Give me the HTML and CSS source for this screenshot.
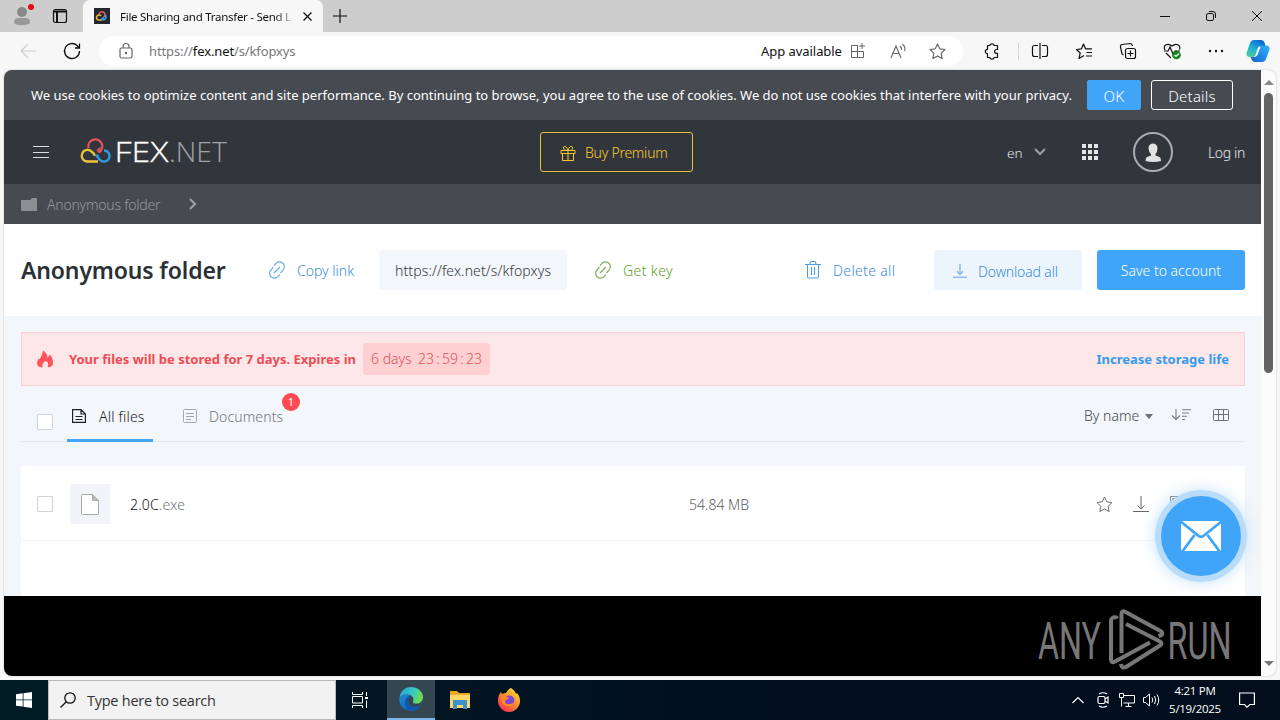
FILE: index.html
```html
<!DOCTYPE html>
<html lang="en">

<head>
    <meta charset="UTF-8">
    <meta name="viewport" content="width=device-width, initial-scale=1.0">
    <title>File Sharing and Transfer - Send Large Files</title>
    <link rel="stylesheet" href="styles.css">
</head>

<body>
    <div class="titlebar">
        <div class="title-left">
            <svg class="profile" width="26" height="26" viewBox="0 0 26 26"><circle cx="13" cy="9" r="5" fill="#888"/><path d="M5 20c0-5 2-5 8-5s8 0 8 5c-3 3-13 3-16 0z" fill="#999"/><circle cx="22" cy="4" r="3" fill="#e20a17"/></svg>
            <svg class="workspace" width="16" height="16" viewBox="0 0 16 16" fill="none" stroke="#111" stroke-width="1.2"><rect x="1.500" y="1.500" width="13" height="13" rx="2"/><path d="M2 3.500h12M5 4v10" stroke-width="2"/></svg>
        </div>
        <div class="tab">
            <svg width="16" height="16" viewBox="0 0 16 16" fill="none" stroke-width="1.6"><rect width="16" height="16" fill="#24272d"/><path d="M5 7a3 3 0 1 1 5 2" stroke="#e5535b"/><path d="M8 12H5a2.500 2.500 0 1 1 2-4" stroke="#e6b93a"/><path d="M11 7a2.500 2.500 0 1 1-3 4l2-2" stroke="#38a1e8"/></svg>
            <span class="tab-title">File Sharing and Transfer - Send L</span>
            <svg class="tab-close" width="9" height="9" viewBox="0 0 9 9" stroke="#111" stroke-width="1.3"><path d="M.5.5l8 8M8.500.5l-8 8"/></svg>
        </div>
        <svg class="newtab" width="14" height="14" viewBox="0 0 14 14" stroke="#111" stroke-width="1.2"><path d="M7 0v14M0 7h14"/></svg>
        <div class="win-btns">
            <svg width="10" height="10" viewBox="0 0 10 10" stroke="#111"><path d="M0 5.500h10"/></svg>
            <svg width="10" height="10" viewBox="0 0 10 10" fill="none" stroke="#111"><rect x=".5" y="2.500" width="7" height="7" rx="1.500"/><path d="M3 .5h4a2.500 2.500 0 0 1 2.500 2.500v4"/></svg>
            <svg width="10" height="10" viewBox="0 0 10 10" stroke="#111"><path d="M0 0l10 10M10 0L0 10"/></svg>
        </div>
    </div>

    <div class="toolbar">
        <svg class="back" width="16" height="16" viewBox="0 0 16 16" fill="none" stroke="#ccc" stroke-width="1.2"><path d="M16 8H1M8 1L1 8l7 7"/></svg>
        <svg class="reload" width="18" height="18" viewBox="0 0 18 18" fill="none" stroke="#111" stroke-width="1.3"><path d="M16.500 9a7.500 7.500 0 1 1-2.200-5.300L16.300 6M16.500 1.500V6H12"/></svg>
        <div class="address">
            <svg width="14" height="16" viewBox="0 0 14 16" fill="none" stroke="#666" stroke-width="1.2"><rect x="1" y="5" width="12" height="10" rx="1.500"/><path d="M4 5V3.500a3 3 0 0 1 6 0V5"/><circle cx="7" cy="10" r=".7" fill="#555"/></svg>
            <span class="url">https://<b>fex.net</b>/s/kfopxys</span>
            <span class="app">App available</span>
            <svg class="apps-icon" width="16" height="16" viewBox="0 0 16 16" fill="none" stroke="#666"><path d="M8 2.500H1.500v12h12V8.500M1.500 8.500h12M7.500 2.500v12M12 0v6M9 3h6"/></svg>
            <svg class="read-icon" width="17" height="16" viewBox="0 0 17 16" fill="none" stroke="#666" stroke-width="1.100"><path d="M1 15L6 3l5 12M3 10.500h6M10 3q2 1.500 1.500 4M12.500 1q3.500 3 2 7"/></svg>
            <svg class="fav-icon" width="17" height="17" viewBox="0 0 18 18" fill="none" stroke="#666" stroke-width="1.200" stroke-linejoin="round"><path d="M9 1l2.400 5.200 5.600.7-4.100 3.900 1 5.700L9 13.700l-4.900 2.800 1-5.700L1 6.900l5.600-.7z"/></svg>
        </div>
        <div class="tools">
            <svg width="18" height="18" viewBox="0 0 18 18" fill="none" stroke="#111" stroke-width="1.200" stroke-linejoin="round"><path d="M4.500 3.500h2.300a2.300 2.300 0 0 1 4.400 0h3.300v4h-1a1.900 1.900 0 0 0 0 3.800h1v4.200h-3.300a2.300 2.300 0 0 1-4.400 0H4.500v-3.800a2.200 2.200 0 0 1 0-4.400z"/></svg>
            <i class="divider"></i>
            <svg width="18" height="18" viewBox="0 0 18 18" fill="none" stroke="#111" stroke-width="1.200"><path d="M7 3.500H3.500a2 2 0 0 0-2 2v7a2 2 0 0 0 2 2H7M11 3.500h3.500a2 2 0 0 1 2 2v7a2 2 0 0 1-2 2H11M9 1v16"/></svg>
            <svg width="18" height="18" viewBox="0 0 18 18" fill="none" stroke="#111" stroke-width="1.200" stroke-linejoin="round"><path d="M9 13.500L4 16.500l1.200-5.500L1.500 7.500l5-.7L8.500 2l2 4.800H17M11.500 10.500H17M11 14h6"/></svg>
            <svg width="18" height="18" viewBox="0 0 18 18" fill="none" stroke="#111" stroke-width="1.200"><rect x="6.500" y="6.500" width="10" height="10" rx="2"/><path d="M11.500 8.500v6M8.500 11.500h6M4.500 13L3 12l-1.500-7a2 2 0 0 1 2-2.500L11 1.500q2 0 2.500 2.500"/></svg>
            <svg width="18" height="18" viewBox="0 0 18 18" fill="none" stroke="#111" stroke-width="1.200"><path d="M2 8C-.5 3 5 .5 9 4c4-3.500 9-1 7.500 3.500M1 9h4l2-4 3 7 2-3h5M3 11l5 5"/><circle cx="13.500" cy="13" r="4.300" fill="#16821c" stroke="none"/><path d="M11.500 13l1.500 1.500 3-3" stroke="#fff"/></svg>
            <svg width="18" height="18" viewBox="0 0 18 18" fill="#111"><circle cx="3" cy="9" r="1.200"/><circle cx="9" cy="9" r="1.200"/><circle cx="15" cy="9" r="1.200"/></svg>
        </div>
        <svg class="copilot" width="24" height="24" viewBox="0 0 24 24">
            <defs>
                <linearGradient id="cpa" x1="0" y1="1" x2="0.600" y2="0"><stop offset="0" stop-color="#57d08b"/><stop offset=".5" stop-color="#20b5d5"/><stop offset="1" stop-color="#126bd0"/></linearGradient>
                <linearGradient id="cpb" x1="0" y1="1" x2="1" y2="0"><stop offset="0" stop-color="#1762c9"/><stop offset="1" stop-color="#2bb5ff"/></linearGradient>
            </defs>
            <path d="M8 1h7q3 0 4 4l.5 2H15q-2.500 0-3.300 3L10 15q-.8 3-3 3H4q-4 0-3.500-4L4 4q1-3 4-3z" fill="url(#cpa)"/>
            <path d="M16 23H9q-3 0-4-4l-.3-1H8q2.700 0 3.600-3L13 9.500Q14 6.500 17 6.500h3q4 0 3.500 4L20 20q-1 3-4 3z" fill="url(#cpb)"/>
            <path d="M12.300 8h2.200l-3 8H9.500z" fill="#fff"/>
        </svg>
    </div>

    <div class="content">
        <div class="page">
            <div class="cookies">
                <span class="cookies-text">We use cookies to optimize content and site performance. By continuing to browse, you agree to the use of cookies. We do not use cookies that interfere with your privacy.</span>
                <button type="button" class="ok">OK</button>
                <button type="button" class="details">Details</button>
            </div>
            <div class="header">
                <svg class="burger" width="16" height="12" viewBox="0 0 16 12" stroke="#ddd"><path d="M0 .5h16M0 6.500h16M0 11.500h16"/></svg>
                <svg class="logo" width="150" height="30" viewBox="0 0 150 30">
                    <g fill="none" stroke-width="2.300">
                        <path d="M8.500 12A7 7 0 1 1 19.500 16L17.500 15" stroke="#e25258"/>
                        <path d="M18 25.500H7a5.800 5.800 0 1 1 5-9.500q3 2 2.500 4" stroke="#f0c33c"/>
                        <path d="M24 14.500a5.600 5.600 0 1 1-4.500 9L16.500 19.500" stroke="#2f9be8"/>
                        <path d="M14.500 18.500h4v4z" fill="#2f9be8" stroke="none"/>
                        <path d="M16 14.500h4.500v-4z" fill="#e25258" stroke="none"/>
                    </g>
                    <text x="34.500" y="25.500" textLength="54" lengthAdjust="spacingAndGlyphs" class="logo-fex">FEX</text>
                    <text x="89" y="25.500" textLength="58" lengthAdjust="spacingAndGlyphs" class="logo-net">.NET</text>
                </svg>
                <button type="button" class="premium">
                    <svg width="16" height="16" viewBox="0 0 16 16" fill="none" stroke="#fdc92b"><path d="M1 5.500h14v3H1zM2.500 8.500h11v7h-11zM8 5.500v10M8 5.500C7 1 3.500 0 3.500 3q0 2.500 4.500 2.500C12.500 5.500 12.500 5 12.500 3 12.500 0 9 1 8 5.500"/></svg>
                    <span>Buy Premium</span>
                </button>
                <span class="lang">en</span>
                <svg class="lang-arrow" width="12" height="8" viewBox="0 0 12 8" fill="none" stroke="#9a9da2" stroke-width="2"><path d="M1 1l5 5 5-5"/></svg>
                <svg class="grid" width="16" height="16" viewBox="0 0 16 16" fill="#e4e5e6"><path d="M0 0h4v4H0zM6 0h4v4H6zM12 0h4v4h-4zM0 6h4v4H0zM6 6h4v4H6zM12 6h4v4h-4zM0 12h4v4H0zM6 12h4v4H6zM12 12h4v4h-4z"/></svg>
                <svg class="avatar" width="40" height="40" viewBox="0 0 40 40"><circle cx="20" cy="20" r="19" fill="none" stroke="#a9acb1" stroke-width="2"/><path d="M15.500 16c0-6 9-6 9 0q0 4-2 6v1.500l4 1.500q1.500.7 1.500 4-8 2-15.500 0 0-3.300 1.500-4l4-1.500V22q-2.500-2-2.500-6z" fill="#e1e2e3"/></svg>
                <span class="login">Log in</span>
            </div>
            <div class="crumbs">
                <svg width="16" height="13" viewBox="0 0 16 13" fill="#8b8f94"><path d="M0 2h9l2-2h5v13H0z"/></svg>
                <span class="crumb">Anonymous folder</span>
                <svg width="8" height="12" viewBox="0 0 8 12" fill="none" stroke="#a0a3a8" stroke-width="2"><path d="M1 1l5 5-5 5"/></svg>
            </div>
            <div class="actions">
                <h1>Anonymous folder</h1>
                <svg class="link-icon" width="18" height="18" viewBox="0 0 18 18" fill="none" stroke="#6aaee2" stroke-width="1.200"><path d="M6 4.500l1.800-1.800a4.800 4.800 0 0 1 7.500 6L12.500 12M12 13.500l-1.800 1.800a4.800 4.800 0 0 1-7.500-6L5.500 6M6 12l6-6"/></svg>
                <span class="copy">Copy link</span>
                <span class="link-box"><span>https://fex.net/s/kfopxys</span></span>
                <svg class="key-icon" width="18" height="18" viewBox="0 0 18 18" fill="none" stroke="#84ae55" stroke-width="1.200"><path d="M6 4.500l1.800-1.800a4.800 4.800 0 0 1 7.500 6L12.500 12M12 13.500l-1.800 1.800a4.800 4.800 0 0 1-7.500-6L5.500 6M6 12l6-6"/></svg>
                <span class="key">Get key</span>
                <svg class="trash" width="16" height="18" viewBox="0 0 16 18" fill="none" stroke="#4c9de0" stroke-width="1.100"><path d="M0 3.500h16M2.500 3.500v12q0 1.500 1.500 1.500h8q1.500 0 1.500-1.500v-12M5 3.500q0-3 1.500-3h3q1.500 0 1.500 3M6.500 6v8M9.500 6v8"/></svg>
                <span class="delete">Delete all</span>
                <button type="button" class="download">
                    <svg width="14" height="14" viewBox="0 0 14 14" fill="none" stroke="#8fbce6" stroke-width="1.500"><path d="M7 0v10M4 7l3 3.500L10 7M0 13.300h14"/></svg>
                    <span>Download all</span>
                </button>
                <button type="button" class="save"><span>Save to account</span></button>
            </div>

            <div class="main">
                <div class="alert">
                    <svg width="16" height="18" viewBox="0 0 16 18" fill="#ff5459"><path d="M6 .5c3 2 4.500 4 4.500 7.500L13 4.500c2 3 3 5 3 8.500 0 2-1 3-3 4l-2.500.5Q12 15 10.500 12L8 11c-2 2-3.500 4-2 6.500L3 17C-.5 16-.5 12 1.500 8.500l1 1C4 7 5.500 4 6 .5z"/></svg>
                    <span class="alert-text">Your files will be stored for 7 days. Expires in</span>
                    <span class="timer"><span class="days">6 days</span><span class="clock">23<i>:</i>59<i>:</i>23</span></span>
                    <a href="#" class="increase">Increase storage life</a>
                </div>

                <div class="tabs">
                    <span class="check"></span>
                    <div class="filter active">
                        <svg width="14" height="14" viewBox="0 0 14 14" fill="none" stroke="#1e2227" stroke-width="1.200"><path d="M.6.600H9L13.400 5v8.400H.6zM9 .6V5h4.400M3.500 7.500h7M3.500 10.500h7"/></svg>
                        <span>All files</span>
                    </div>
                    <div class="filter docs">
                        <svg width="14" height="14" viewBox="0 0 14 14" fill="none" stroke="#a4a8ad"><rect x=".5" y=".5" width="13" height="13" rx="1"/><path d="M3 4.500h8M3 7.500h8M3 10.500h5"/></svg>
                        <span>Documents</span>
                        <b class="badge">1</b>
                    </div>
                    <span class="sort">By name</span>
                    <i class="caret"></i>
                    <svg class="sort-icon" width="20" height="12" viewBox="0 0 20 12" fill="none" stroke="#777c82" stroke-width="1.100"><path d="M5 0v10.500M1 6.500l4 4 4-4M11 .8h9M11 4h7M11 7.200h5M11 10.500h3"/></svg>
                    <svg class="table-icon" width="16" height="12" viewBox="0 0 16 12" fill="none" stroke="#6c7177"><rect x=".5" y=".5" width="15" height="11" rx="1"/><path d="M.5 5.500h15M5.500.5v11M10.500.5v11"/></svg>
                </div>

                <div class="list">
                    <div class="row">
                        <span class="check"></span>
                        <span class="thumb">
                            <svg width="18" height="21" viewBox="0 0 18 21" fill="#fff" stroke="#aaa"><path d="M1.500.5h10l6 6v13q0 1-1 1h-15q-1 0-1-1v-18q0-1 1-1z"/><path d="M11.500.5v6h6z" fill="#bbb"/></svg>
                        </span>
                        <span class="name">2.0C<i>.exe</i></span>
                        <span class="size">54.84 MB</span>
                        <svg class="star" width="17" height="17" viewBox="0 0 18 18" fill="none" stroke="#666" stroke-linejoin="round"><path d="M9 1l2.400 5.200 5.600.7-4.100 3.900 1 5.700L9 13.700l-4.900 2.800 1-5.700L1 6.900l5.600-.7z"/></svg>
                        <svg class="dl" width="16" height="17" viewBox="0 0 16 17" fill="none" stroke="#666"><path d="M8 0v13M4.500 9.500L8 13l3.500-3.500M0 15.500h16"/></svg>
                        <svg class="copy-icon" width="14" height="17" viewBox="0 0 14 17" fill="none" stroke="#666"><path d="M.5 14V.5H10M2.500 2.500h9v13h-9z"/></svg>
                    </div>
                </div>
                <div class="mail">
                    <svg width="40" height="30" viewBox="0 0 40 30"><path d="M0 0h40v30H0z" fill="#fff"/><path d="M-1 0l18 14.500q3 2.500 6 0L41 0M1 31l12.500-17M39 31L26.500 14" fill="none" stroke="#40a4f8" stroke-width="2.800"/></svg>
                </div>
            </div>

            <div class="black">
                <svg width="194" height="62" viewBox="0 0 194 62">
                    <g class="mark-text">
                        <text x="0" y="50" textLength="63" lengthAdjust="spacingAndGlyphs">ANY</text>
                        <text x="129.500" y="50" textLength="64" lengthAdjust="spacingAndGlyphs">RUN</text>
                    </g>
                    <path d="M78.500 9.500v-1q-5.500-1-5.500 4v38q0 4 4 2l35-19M83.500 44V5q0-4 4-2l35 19q3 2 1 4l-3 1M88 15l34 17.500q3 2 0 4L88 58q-4.500 2-5-3" fill="none" stroke="#777" stroke-width="4" stroke-linejoin="round"/>
                </svg>
            </div>
        </div>
        <div class="scroll">
            <i class="up"></i>
            <i class="thumb-bar"></i>
            <i class="down"></i>
        </div>
    </div>

    <div class="taskbar">
        <div class="start"><svg width="16" height="16" viewBox="0 0 16 16" fill="#fff"><path d="M0 2.300L6.700 1.300v6.200H0zM7.500 1.200L16 0v7.500H7.500zM0 8.300h6.700v6.300L0 13.700zM7.500 8.300H16V16l-8.500-1.200z"/></svg></div>
        <div class="search">
            <svg width="16" height="16" viewBox="0 0 16 16" fill="none" stroke="#111" stroke-width="1.300"><circle cx="10" cy="6" r="5.200"/><path d="M6.300 9.700L.5 15.500"/></svg>
            <span>Type here to search</span>
        </div>
        <div class="task"><svg width="16" height="16" viewBox="0 0 16 16" fill="none" stroke="#fff"><path d="M.5 0v2.500h10V0M.5 16v-2.500h10V16M.5 4.500h10v6.500H.5zM14.500 0v4M14.500 8.500V16"/><path d="M13 5h3v2h-3z" fill="#fff" stroke="none"/></svg></div>
        <div class="task edge">
            <svg width="24" height="24" viewBox="0 0 24 24">
                <defs>
                    <linearGradient id="ea" x1="0" y1="0" x2="1" y2=".3"><stop offset="0" stop-color="#269bdc"/><stop offset=".6" stop-color="#35c9c4"/><stop offset="1" stop-color="#69dc57"/></linearGradient>
                    <linearGradient id="eb" x1="0" y1="0" x2="1" y2="1"><stop offset="0" stop-color="#1b90df"/><stop offset="1" stop-color="#0b4d9f"/></linearGradient>
                </defs>
                <path d="M.5 11C1 4 6 0 12 0c8 0 12 6 12 10 0 5-4 7-8 6.500-3-.5-2-2-1.500-3.500C15 7 5 5 .5 11z" fill="url(#ea)"/>
                <path d="M.3 12C3 7 9 7 11 9c-4 3-3 8 1 10 4 2 7 1 10-1-3 6-8 6.500-12 5.700C4 22.500 0 18 .3 12z" fill="url(#eb)"/>
                <path d="M11 9c-6 1-7 10 0 14.800 5 .5 8-1.800 11-5.800-3 2-7 2.500-10 .5-3-2.500-3-6-1-9.500z" fill="#1258a8"/>
            </svg>
        </div>
        <div class="task"><svg width="22" height="20" viewBox="0 0 22 20"><path d="M1 1h7l2 2h11v15H1z" fill="#e9a829"/><path d="M1 5h20v13H1z" fill="#ffd766"/><path d="M4 10h14v9h-4v-4H8v4H4z" fill="#3f92d2"/></svg></div>
        <div class="task">
            <svg width="24" height="24" viewBox="0 0 24 24">
                <defs><linearGradient id="ff" x1="1" y1="0" x2="0.200" y2="1"><stop offset="0" stop-color="#fff044"/><stop offset=".45" stop-color="#ff9a28"/><stop offset="1" stop-color="#f52b57"/></linearGradient></defs>
                <path d="M14 0c4 3 5 5 5 6l1-1c2 2 3 5 3 8 0 6-5 11-11 11S1 19 1 13c0-4 1-7 3-9l1 2q2-1 4-1 2-4 5-5z" fill="url(#ff)"/>
                <circle cx="12.500" cy="12.500" r="5" fill="#8046d8"/>
                <path d="M4 9c4-2 6 0 8 1-1 2-4 1-4 4 1 3 6 3 9 0-1 6-13 7-13-5z" fill="#ff8b25"/>
            </svg>
        </div>
        <div class="tray">
            <svg width="12" height="8" viewBox="0 0 12 8" fill="none" stroke="#fff" stroke-width="1.200"><path d="M.5 7L6 1.500 11.500 7"/></svg>
            <svg class="meet" width="12" height="16" viewBox="0 0 12 16" fill="none" stroke="#fff" stroke-width="1.200"><rect x="1" y="4.500" width="7" height="7" rx="1.500"/><path d="M8 7l3-2v6L8 9M2 2q4-2.500 8 0M2 14q4 2.500 8 0"/></svg>
            <svg class="net" width="16" height="14" viewBox="0 0 16 14" fill="none" stroke="#fff"><path d="M5 2.500h10.500v7.500H4.500M9.500 10v3M6.500 13.500h6M.5.5h4v4h-4zM2.500 4.500v9"/></svg>
            <svg class="vol" width="17" height="14" viewBox="0 0 17 14" fill="none" stroke="#fff"><path d="M.5 4.500h2L6.500 1v12l-4-3.500h-2zM9 4.500q1.500 2.500 0 5M11.500 3q2.500 4 0 8M14 1.500q3.500 5.500 0 11"/></svg>
            <div class="time"><span>4:21 PM</span><span>5/19/2025</span></div>
            <svg class="note" width="16" height="16" viewBox="0 0 16 16" fill="none" stroke="#fff" stroke-width="1.200"><path d="M.6 1h14.800v11.500H11L8 15.200 5.500 12.500H.6z"/></svg>
        </div>
    </div>
</body>

</html>
```
FILE: styles.css
```css
* {
    box-sizing: border-box;
    margin: 0;
    padding: 0;
}
body {
    width: 1280px;
    height: 720px;
    overflow: hidden;
    background-color: #f7f7f7;
    font-family: "Noto Sans", "Open Sans", sans-serif;
    font-size: 13px;
    white-space: nowrap;
}
svg {
    display: block;
    flex: none;
    overflow: visible;
}
span, button {
    flex: none;
}
button {
    font-family: inherit;
    cursor: pointer;
}
i {
    font-style: normal;
}

/* browser */
.titlebar {
    display: flex;
    align-items: center;
    height: 32px;
    background-color: #cdcdcd;
}
.title-left {
    display: flex;
    align-items: center;
    width: 83px;
    height: 32px;
    padding-left: 9px;
    border-bottom-right-radius: 5px;
}
.workspace {
    margin-left: 17px;
}
.tab {
    display: flex;
    align-items: center;
    width: 240px;
    height: 32px;
    padding-left: 11px;
    background-color: #f7f7f7;
    border-radius: 7px 7px 0 0;
}
.tab-title {
    width: 176px;
    margin-left: 10px;
    font-size: 11.5px;
    letter-spacing: -0.27px;
    color: transparent;
    background: linear-gradient(to right, #111 155px, #ccc 174px);
    -webkit-background-clip: text;
    background-clip: text;
}
.tab-close {
    margin-left: 7px;
}
.newtab {
    margin-left: 10px;
}
.win-btns {
    display: flex;
    gap: 36px;
    margin-left: auto;
    margin-right: 18px;
}
.toolbar {
    display: flex;
    align-items: center;
    height: 38px;
    background-color: #f7f7f7;
}
.back {
    margin-left: 20px;
}
.reload {
    margin-left: 27px;
}
.address {
    display: flex;
    align-items: center;
    width: 864px;
    height: 30px;
    margin-left: 18px;
    padding-left: 20px;
    border-radius: 15px;
    background-color: #fff;
}
.url {
    width: 160px;
    margin-left: 16px;
    font-size: 13px;
    letter-spacing: -0.12px;
    color: #777;
}
.url b {
    font-weight: 400;
    color: #111;
}
.app {
    width: 82px;
    margin-left: 452px;
    color: #111;
    letter-spacing: -0.05px;
}
.apps-icon {
    margin-left: 7px;
}
.read-icon {
    margin-left: 24px;
}
.fav-icon {
    margin-left: 22px;
}
.tools {
    display: flex;
    align-items: center;
    gap: 26px;
    margin-left: 20px;
}
.divider {
    width: 1px;
    height: 17px;
    margin: 0 -14px 0 -9px;
    background-color: #d5d5d5;
}
.copilot {
    margin-left: 21px;
}

/* page */
.content {
    display: flex;
    height: 606px;
    margin: 0 4px 0 4px;
    overflow: hidden;
    border-radius: 8px;
    background-color: #fbfbfb;
    box-shadow: 0 0 2px #bbb;
}
.page {
    width: 1257px;
}
.cookies {
    display: flex;
    align-items: center;
    height: 50px;
    padding-left: 27px;
    background-color: #464b52;
    color: #fff;
}
.cookies-text {
    width: 1042px;
    font-size: 13px;
    letter-spacing: 0;
}
.ok, .details {
    height: 30px;
    border: 1px solid #40a4f8;
    border-radius: 2px;
    background-color: #40a4f8;
    color: #fff;
    font-size: 15px;
    font-weight: 300;
    letter-spacing: 0.2px;
    line-height: 30px;
}
.ok {
    width: 54px;
    margin-left: 14px;
}
.details {
    width: 82px;
    margin-left: 10px;
    border-color: #fff;
    border-radius: 3px;
    background-color: transparent;
}
.header {
    display: flex;
    align-items: center;
    height: 64px;
    padding-left: 29px;
    background-color: #31363d;
    color: #e8e8e8;
    font-weight: 300;
}
.logo {
    margin-left: 31px;
    margin-top: -2px;
}
.logo-fex, .logo-net {
    font-family: "Open Sans", sans-serif;
    font-size: 28px;
    font-weight: 300;
    fill: #fff;
    stroke: #fff;
    stroke-width: 0.3px;
}
.logo-net {
    fill: #a0a3a9;
    stroke: none;
}
.premium {
    display: flex;
    align-items: center;
    width: 153px;
    height: 40px;
    margin-left: 310px;
    padding-left: 19px;
    border: 1px solid #e6c13c;
    border-radius: 3px;
    background-color: transparent;
    color: #fdc92b;
    font-size: 14px;
    font-weight: 300;
    letter-spacing: -0.25px;
}
.premium svg {
    margin-top: 2px;
}
.premium span {
    margin-left: 9px;
}
.lang {
    width: 16px;
    margin-left: 314px;
    margin-top: 2px;
    font-size: 13.5px;
}
.lang-arrow {
    margin-left: 11px;
}
.grid {
    margin-left: 36px;
}
.avatar {
    margin-left: 35px;
}
.login {
    margin-left: 35px;
    margin-top: 1px;
    font-size: 14px;
    letter-spacing: -0.35px;
}
.crumbs {
    display: flex;
    align-items: center;
    height: 40px;
    padding-left: 17px;
    background-color: #464b52;
    color: #96999e;
    font-weight: 300;
}
.crumb {
    width: 114px;
    margin: 0 28px 0 10px;
    font-size: 14px;
    letter-spacing: -0.22px;
}
.actions {
    display: flex;
    align-items: center;
    height: 92px;
    padding-left: 17px;
    background-color: #fff;
    font-size: 14px;
    font-weight: 300;
}
.actions h1 {
    width: 205px;
    color: #2b3037;
    font-size: 23px;
    font-weight: 600;
    letter-spacing: -0.15px;
}
.link-icon {
    margin-left: 42px;
}
.copy {
    width: 58px;
    margin-left: 11px;
    color: #3a8ed8;
}
.link-box {
    width: 188px;
    height: 40px;
    margin-left: 24px;
    padding-left: 16px;
    border-radius: 3px;
    background-color: #f3f6fa;
    color: #33383f;
    letter-spacing: 0.12px;
    line-height: 42px;
}
.key-icon {
    margin-left: 27px;
}
.key {
    width: 51px;
    margin-left: 11px;
    color: #5d9f21;
    letter-spacing: 0.4px;
}
.trash {
    margin-left: 131px;
}
.delete {
    width: 63px;
    margin-left: 12px;
    margin-top: 1px;
    color: #3a8ed8;
    letter-spacing: 0.35px;
}
.download {
    display: flex;
    align-items: center;
    width: 148px;
    height: 40px;
    margin-left: 38px;
    padding: 2px 0 0 19px;
    border: none;
    border-radius: 3px;
    background-color: #ecf5fd;
    color: #3a8ed8;
    font-size: 14px;
    font-weight: 300;
    letter-spacing: -0.15px;
}
.download span {
    margin-left: 11px;
}
.save {
    width: 148px;
    height: 40px;
    margin-left: 15px;
    padding-top: 1px;
    border: none;
    border-radius: 3px;
    background-color: #40a4f8;
    color: #fff;
    font-size: 14px;
    font-weight: 300;
}
.main {
    position: relative;
    height: 280px;
    padding: 16px 16px 0 17px;
    background-color: #f3f6fa;
}
.alert {
    display: flex;
    align-items: center;
    height: 54px;
    padding: 0 15px;
    border: 1px solid #fbd0d3;
    background-color: #fee7e8;
}
.alert-text {
    width: 287px;
    margin-left: 16px;
    color: #ee4c55;
    font-weight: 700;
}
.timer {
    display: flex;
    width: 127px;
    margin-left: 7px;
    padding-left: 8px;
    border-radius: 3px;
    background-color: #ffd0d2;
    color: #dc5259;
    font-size: 14px;
    font-weight: 300;
    line-height: 32px;
}
.days {
    width: 47px;
}
.clock i {
    display: inline-block;
    width: 8px;
    text-align: center;
}
.increase {
    margin-left: auto;
    color: #369af0;
    font-weight: 700;
    text-decoration: none;
}
.tabs {
    display: flex;
    align-items: center;
    height: 56px;
    padding-left: 16px;
    border-bottom: 1px solid #e2e6ea;
    font-size: 14px;
    font-weight: 300;
}
.check {
    width: 16px;
    height: 16px;
    border: 1px solid #d0d3d8;
    border-radius: 1px;
    background-color: #fff;
}
.tabs .check {
    margin-top: 17px;
}
.filter {
    position: relative;
    display: flex;
    align-items: center;
    width: 86px;
    height: 56px;
    margin-left: 14px;
    padding: 8px 0 0 5px;
    color: #1e2227;
}
.filter svg {
    margin-top: -1px;
}
.filter span {
    margin-left: 13px;
    letter-spacing: 0.2px;
}
.active {
    border-bottom: 3px solid #40a4f8;
}
.docs {
    width: 108px;
    margin-left: 25px;
    padding-bottom: 3px;
    color: #70757c;
}
.docs span {
    margin-left: 12px;
    letter-spacing: 0.12px;
}
.badge {
    position: absolute;
    left: 104px;
    top: 7px;
    width: 18px;
    height: 18px;
    border-radius: 50%;
    background-color: #ff4a4f;
    color: #fff;
    font-size: 11px;
    font-weight: 400;
    line-height: 18px;
    text-align: center;
}
.sort {
    width: 56px;
    margin-left: 798px;
    margin-top: 3px;
    color: #41464c;
}
.caret {
    margin: 5px 0 0 5px;
    border: 4px solid transparent;
    border-top: 5px solid #6b7076;
    border-bottom: 0;
}
.sort-icon {
    margin: 2px 0 0 18px;
}
.table-icon {
    margin: 2px 0 0 22px;
}
.list {
    height: 130px;
    margin-top: 24px;
    background-color: #fff;
}
.row {
    display: flex;
    align-items: center;
    height: 75px;
    padding: 2px 0 0 16px;
    border-bottom: 1px solid #f0f2f4;
    font-size: 14px;
    font-weight: 300;
}
.thumb {
    display: flex;
    align-items: center;
    justify-content: center;
    width: 40px;
    height: 40px;
    margin-left: 17px;
    background-color: #f3f4f9;
}
.name {
    width: 55px;
    margin-left: 20px;
    margin-top: 1px;
    color: #111;
    letter-spacing: 0.2px;
}
.name i {
    color: #70757c;
}
.size {
    width: 60px;
    margin-left: 504px;
    margin-top: 1px;
    color: #5d6269;
}
.star {
    margin-left: 347px;
}
.dl {
    margin-left: 20px;
}
.copy-icon {
    margin-left: 21px;
}
.mail {
    position: absolute;
    left: 1157px;
    top: 180px;
    display: flex;
    align-items: center;
    justify-content: center;
    width: 80px;
    height: 80px;
    border-radius: 50%;
    background-color: #40a4f8;
    box-shadow: 0 0 0 6px #b9dcfa, 0 0 16px 6px #c5e2fa;
}
.black {
    display: flex;
    justify-content: flex-end;
    align-items: center;
    height: 80px;
    padding: 10px 29px 0 0;
    background-color: #000;
}
.black svg {
    margin-top: -2px;
}
.mark-text {
    font-family: Roboto, sans-serif;
    font-size: 52px;
    font-weight: 400;
    fill: #777;
}
.scroll {
    display: flex;
    flex-direction: column;
    align-items: center;
    width: 15px;
    padding: 10px 0 10px;
}
.up, .down {
    border: 5px solid transparent;
    border-top: 0;
    border-bottom: 5px solid #888;
}
.down {
    margin-top: auto;
    border-top: 5px solid #777;
    border-bottom: 0;
}
.thumb-bar {
    width: 9px;
    height: 280px;
    margin-top: 8px;
    border-radius: 5px;
    background-color: #636363;
}

/* taskbar */
.taskbar {
    display: flex;
    height: 40px;
    margin-top: 4px;
    background: linear-gradient(to right, #011c24, #010f20 60%, #020e1c);
    font-family: "Open Sans", sans-serif;
}
.start, .task {
    display: flex;
    align-items: center;
    justify-content: center;
    width: 49px;
}
.start {
    width: 48px;
}
.search {
    display: flex;
    align-items: center;
    width: 288px;
    padding-left: 11px;
    border: 1px solid #bbb;
    background-color: #f2f2f2;
    color: #333;
    font-size: 14.5px;
    letter-spacing: -0.25px;
}
.search span {
    margin-left: 11px;
}
.task.edge {
    width: 48px;
    border-bottom: 2px solid #78b7e8;
    background-color: #34464f;
}
.search + .task {
    width: 51px;
    padding-right: 3px;
}
.tray {
    display: flex;
    align-items: center;
    margin-left: auto;
    padding-right: 25px;
    color: #fff;
}
.meet {
    margin-left: 13px;
}
.net {
    margin-left: 10px;
}
.vol {
    margin-left: 8px;
}
.time {
    display: flex;
    flex-direction: column;
    align-items: center;
    width: 54px;
    margin-left: 8px;
    font-size: 11.5px;
    letter-spacing: -0.3px;
    line-height: 18px;
}
.note {
    margin-left: 17px;
}
```
